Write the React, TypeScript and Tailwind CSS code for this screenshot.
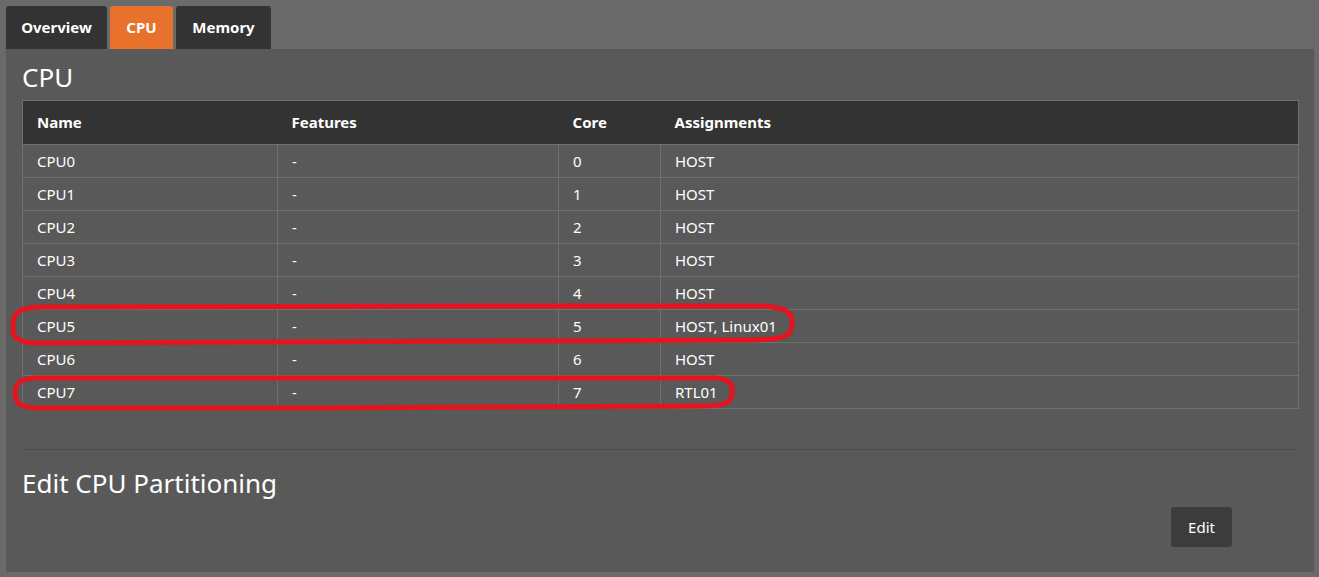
import React from "react";

const rows = [
  ["CPU0", "-", "0", "HOST"],
  ["CPU1", "-", "1", "HOST"],
  ["CPU2", "-", "2", "HOST"],
  ["CPU3", "-", "3", "HOST"],
  ["CPU4", "-", "4", "HOST"],
  ["CPU5", "-", "5", "HOST, Linux01"],
  ["CPU6", "-", "6", "HOST"],
  ["CPU7", "-", "7", "RTL01"],
];

export default function App() {
  return (
    <div
      className="relative w-[1319px] h-[577px] bg-[#6a6a6a] overflow-hidden text-white"
      style={{ fontFamily: '"Noto Sans", "Open Sans", sans-serif' }}
    >
      <div className="pt-[6px] px-[6px]">
        <div className="flex gap-[3px] h-[43px]">
          <div className="w-[101px] bg-[#333333] rounded-t-[3px] flex items-center justify-center text-[15px] font-bold">Overview</div>
          <div className="w-[63px] bg-[#e8712b] rounded-t-[3px] flex items-center justify-center text-[15px] font-bold">CPU</div>
          <div className="w-[95px] bg-[#333333] rounded-t-[3px] flex items-center justify-center text-[15px] font-bold">Memory</div>
        </div>
        <div className="w-[1308px] h-[523px] bg-[#595959] rounded-b-[3px] px-[16px] pt-[10px]">
          <h1 className="text-[26px] leading-[36px] font-normal h-[41px]">CPU</h1>
          <table className="w-[1277px] border-collapse text-[15px] border border-[#707070]">
            <thead>
              <tr className="bg-[#333333] h-[44px] font-bold text-left">
                <th className="w-[255px] pl-[14px] font-bold">Name</th>
                <th className="w-[281px] pl-[14px] font-bold">Features</th>
                <th className="w-[102px] pl-[14px] font-bold">Core</th>
                <th className="pl-[14px] font-bold">Assignments</th>
              </tr>
            </thead>
            <tbody>
              {rows.map((r) => (
                <tr key={r[0]} className="h-[33px]">
                  {r.map((c, i) => (
                    <td key={i} className="border border-[#707070] pl-[14px] p-0 leading-[20px]">{c}</td>
                  ))}
                </tr>
              ))}
            </tbody>
          </table>
          <div className="mt-[40px] border-t border-[#4c4c4c]" />
          <h2 className="text-[26px] leading-[36px] font-normal mt-[15px]">Edit CPU Partitioning</h2>
          <div className="flex justify-end pr-[66px] mt-[6px]">
            <button className="w-[61px] h-[40px] bg-[#3c3c3c] rounded-[3px] text-[15px]">Edit</button>
          </div>
        </div>
      </div>
      <svg className="absolute left-0 top-0 pointer-events-none" width="1319" height="577">
        <path
          d="M 40 307 C 200 305, 500 306, 760 306 C 792 307, 793 316, 792 326 C 791 338, 780 340, 740 340 C 500 341, 250 343, 40 343 C 14 343, 12 336, 13 325 C 13 312, 20 308, 40 307 Z"
          fill="none"
          stroke="#e5141f"
          strokeWidth="5"
        />
        <path
          d="M 38 378 C 200 377, 450 377, 715 378 C 732 379, 733 386, 732 394 C 731 404, 724 406, 700 406 C 500 407, 250 409, 35 408 C 16 407, 15 400, 15 392 C 16 382, 22 378, 38 378 Z"
          fill="none"
          stroke="#e5141f"
          strokeWidth="5"
        />
      </svg>
    </div>
  );
}
